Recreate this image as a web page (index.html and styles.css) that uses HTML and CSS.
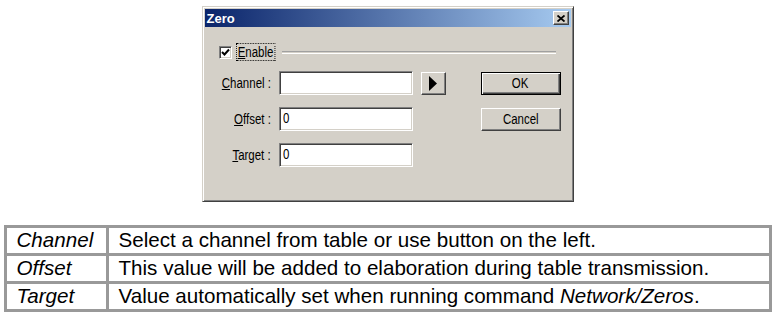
FILE: index.html
```html
<!DOCTYPE html>
<html>
  <head>
    <title>Zero</title>
    <meta charset="UTF-8">
    <link rel="stylesheet" href="styles.css">
  </head>
  <body>
    <div class="page">
      <div class="dialog">
        <div class="titlebar">
          <span class="title">Zero</span>
          <span class="close">
            <svg width="8" height="7" viewBox="0 0 8 7"><path d="M0.5 0.5 L7.5 6.5 M7.5 0.5 L0.5 6.5" stroke="#000" stroke-width="1.8"/></svg>
          </span>
        </div>
        <div class="dlg-body">
          <div class="enable-row">
            <span class="checkbox">
              <svg width="9" height="9" viewBox="0 0 9 9"><path d="M1 4 L3.5 6.5 L8 1.5" fill="none" stroke="#000" stroke-width="2"/></svg>
            </span>
            <span class="focus"><u>E</u>nable</span>
            <span class="etched"></span>
          </div>
          <div class="form">
            <label class="lbl"><span class="nw"><u>C</u>hannel :</span></label>
            <div class="field"></div>
            <div class="btn arrow">
              <svg width="8" height="15" viewBox="0 0 8 15"><path d="M0 0 L8 7.5 L0 15 Z" fill="#000"/></svg>
            </div>
            <div class="btn push default"><span class="nw">OK</span></div>

            <label class="lbl"><span class="nw"><u>O</u>ffset :</span></label>
            <div class="field"><span class="nw">0</span></div>
            <div></div>
            <div class="btn push"><span class="nw">Cancel</span></div>

            <label class="lbl"><span class="nw"><u>T</u>arget :</span></label>
            <div class="field"><span class="nw">0</span></div>
          </div>
        </div>
      </div>

      <table class="desc">
        <tr>
          <td class="key">Channel</td>
          <td>Select a channel from table or use button on the left.</td>
        </tr>
        <tr>
          <td class="key">Offset</td>
          <td>This value will be added to elaboration during table transmission.</td>
        </tr>
        <tr>
          <td class="key">Target</td>
          <td>Value automatically set when running command <i>Network/Zeros</i>.</td>
        </tr>
      </table>
    </div>
  </body>
</html>
```
FILE: styles.css
```css
html, body {
  margin: 0;
  background: #fff;
}
.page {
  display: flex;
  flex-direction: column;
  align-items: center;
}
.dialog {
  width: 372px;
  box-sizing: border-box;
  margin-top: 6px;
  padding: 2px;
  background: #d4d0c8;
  border: 1px solid;
  border-color: #d4d0c8 #404040 #404040 #d4d0c8;
  box-shadow: inset 1px 1px #fff, inset -1px -1px #808080;
  font-family: "Liberation Sans", Arial, sans-serif;
  font-size: 14px;
  color: #000;
}
/* squeeze text to look like the narrow dialog font */
.nw {
  display: inline-block;
  transform: scaleX(0.82);
}
.lbl .nw {
  transform-origin: right center;
}
.field .nw {
  transform-origin: left center;
}
.titlebar {
  display: flex;
  align-items: center;
  height: 18px;
  padding: 0 2px 0 2px;
  background: linear-gradient(to right, #0a246a, #a6caf0);
}
.title {
  flex: 1;
  color: #fff;
  font-weight: bold;
  font-size: 13px;
}
.close {
  display: flex;
  align-items: center;
  justify-content: center;
  width: 16px;
  height: 14px;
  box-sizing: border-box;
  background: #d4d0c8;
  border: 1px solid;
  border-color: #fff #404040 #404040 #fff;
  box-shadow: inset -1px -1px #808080;
}
.dlg-body {
  padding: 16px 10px 32px 0;
}
.enable-row {
  display: flex;
  align-items: center;
  height: 18px;
  padding-left: 14px;
}
.checkbox {
  display: flex;
  align-items: center;
  justify-content: center;
  width: 13px;
  height: 13px;
  box-sizing: border-box;
  background: #fff;
  border: 1px solid;
  border-color: #808080 #fff #fff #808080;
  box-shadow: inset 1px 1px #404040, inset -1px -1px #d4d0c8;
}
.focus {
  display: inline-block;
  margin-left: 4px;
  margin-right: -8px;
  padding: 0 1px;
  line-height: 16px;
  border: 1px dotted #000;
  transform: scaleX(0.82);
  transform-origin: left center;
}
.etched {
  flex: 1;
  margin-left: 7px;
  margin-right: 5px;
  height: 1px;
  border-top: 1px solid #a0a0a0;
  border-bottom: 1px solid #fff;
}
.form {
  display: grid;
  grid-template-columns: 66px 134px 25px 1fr;
  grid-auto-rows: 24px;
  column-gap: 8px;
  row-gap: 12px;
  margin-top: 10px;
  align-items: center;
}
.lbl {
  text-align: right;
  white-space: nowrap;
}
.field {
  height: 24px;
  box-sizing: border-box;
  padding-left: 3px;
  line-height: 20px;
  background: #fff;
  border: 1px solid;
  border-color: #808080 #fff #fff #808080;
  box-shadow: inset 1px 1px #404040, inset -1px -1px #d4d0c8;
}
.btn {
  display: flex;
  align-items: center;
  justify-content: center;
  height: 23px;
  box-sizing: border-box;
  background: #d4d0c8;
  border: 1px solid;
  border-color: #fff #404040 #404040 #fff;
  box-shadow: inset -1px -1px #808080;
}
.arrow {
  width: 25px;
}
.push {
  width: 80px;
  justify-self: end;
}
.push.default {
  border-color: #000;
  box-shadow: inset 1px 1px #fff, inset -1px -1px #404040, inset -2px -2px #808080;
}
.desc {
  width: 768px;
  margin-top: 23px;
  border-collapse: collapse;
  border: 3px solid #999;
  font-family: "Liberation Sans", Arial, sans-serif;
  font-size: 20.6px;
  line-height: 24px;
  color: #000;
}
.desc td {
  border: 3px solid #999;
  padding: 0 10px 1px;
  white-space: nowrap;
}
.desc td.key {
  width: 79px;
  font-style: italic;
}
```
